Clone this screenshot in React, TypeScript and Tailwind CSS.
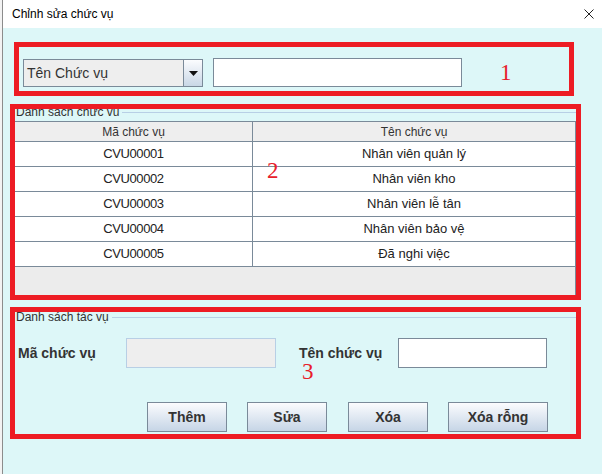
const rows = [
  { code: "CVU00001", name: "Nhân viên quản lý" },
  { code: "CVU00002", name: "Nhân viên kho" },
  { code: "CVU00003", name: "Nhân viên lễ tân" },
  { code: "CVU00004", name: "Nhân viên bảo vệ" },
  { code: "CVU00005", name: "Đã nghi việc" },
];

const buttons = [
  { label: "Thêm", cls: "ml-[132px] w-[80px]" },
  { label: "Sửa", cls: "ml-[20px] w-[80px]" },
  { label: "Xóa", cls: "ml-[21px] w-[80px]" },
  { label: "Xóa rỗng", cls: "ml-[20px] w-[100px]" },
];

export default function App() {
  return (
    <div className="flex w-[602px] h-[474px] bg-white font-['Liberation_Sans',Arial,sans-serif] text-[#222]">
      {/* window edge */}
      <div className="w-[2px] bg-[#f3f3f3]" />
      <div className="w-px bg-[#8c8c8c]" />

      <div className="flex flex-col flex-1">
        {/* Title bar */}
        <div className="h-[28px] flex items-center justify-between bg-white pl-[9px] pr-[8px]">
          <span className="text-[12px] text-black">Chỉnh sửa chức vụ</span>
          <svg width="10" height="10" viewBox="0 0 10 10" className="mr-[0px]">
            <path d="M0.5 0.5 L9.5 9.5 M9.5 0.5 L0.5 9.5" stroke="#222" strokeWidth="1" />
          </svg>
        </div>

        <div className="flex-1 bg-[#ddf7f8] flex flex-col">
          {/* Section 1 */}
          <div className="ml-[11px] mt-[14px] w-[560px] h-[54px] border-[5px] border-[#ed1c24] flex items-start pl-[4px] pt-[11px]">
            <div className="mt-[1px] w-[180px] h-[28px] flex border border-[#7a8a99] bg-[#eeeeee]">
              <div className="flex-1 flex items-center pl-[3px] text-[14px] text-[#333]">Tên Chức vụ</div>
              <div className="w-[19px] flex items-center justify-center border-l border-[#7a8a99] bg-linear-to-b from-[#fbfcfe] to-[#c9d7e6]">
                <svg width="9" height="5" viewBox="0 0 9 5">
                  <path d="M0 0 H9 L4.5 5 Z" fill="#111" />
                </svg>
              </div>
            </div>
            <div className="ml-[10px] w-[249px] h-[29px] bg-white border border-[#7a8a99]" />
            <span className="ml-[38px] mt-[3px] text-[23px] leading-none text-[#e8202a] font-['Liberation_Serif',serif]">
              1
            </span>
          </div>

          {/* Section 2 */}
          <div className="relative ml-[7px] mt-[8px] w-[571px] h-[196px] border-[5px] border-[#ed1c24] flex flex-col">
            <div className="h-[8px] overflow-hidden">
              <div className="-mt-[2px] h-[10px] flex items-center">
                <span className="ml-[1px] text-[12px] leading-[10px] text-[#333]">Danh sách chức vụ</span>
                <div className="flex-1 ml-[3px] h-px bg-[#b8cfe5]" />
              </div>
            </div>

            <div className="mt-[4px] flex-1 flex flex-col border-t border-r border-[#7a8a99]">
              <div className="h-[20px] flex bg-[#eeeeee] border-b border-[#7a8a99] text-[12px] text-[#333]">
                <div className="w-[238px] flex items-center justify-center border-r border-[#7a8a99]">Mã chức vụ</div>
                <div className="flex-1 flex items-center justify-center">Tên chức vụ</div>
              </div>
              {rows.map((r) => (
                <div key={r.code} className="h-[25px] flex bg-white border-b border-[#7a8a99] text-[13px]">
                  <div className="w-[238px] flex items-center justify-center border-r border-[#7a8a99] tracking-[-0.4px]">
                    {r.code}
                  </div>
                  <div className="flex-1 flex items-center justify-center">{r.name}</div>
                </div>
              ))}
              <div className="flex-1 bg-[#ececec]" />
            </div>

            <span className="absolute left-[252px] top-[50px] text-[23px] leading-none text-[#e8202a] font-['Liberation_Serif',serif]">
              2
            </span>
          </div>

          {/* Section 3 */}
          <div className="relative ml-[7px] mt-[7px] w-[571px] h-[132px] border-[5px] border-[#ed1c24] flex flex-col">
            <div className="h-[10px] flex items-center">
              <span className="ml-[1px] text-[12px] leading-[10px] text-[#333]">Danh sách tác vụ</span>
              <div className="flex-1 ml-[3px] h-px bg-[#b8cfe5]" />
            </div>

            <div className="mt-[16px] h-[30px] flex items-center">
              <div className="w-[111px] pl-[3px] text-[14px] font-bold text-[#333]">Mã chức vụ</div>
              <div className="w-[150px] h-[30px] bg-[#eeeeee] border border-[#b8cfe5]" />
              <div className="ml-[23px] w-[99px] text-[14px] font-bold text-[#333]">Tên chức vụ</div>
              <div className="w-[149px] h-[30px] bg-white border border-[#7a8a99]" />
            </div>

            <div className="mt-[34px] h-[30px] flex">
              {buttons.map((b) => (
                <button
                  key={b.label}
                  className={`${b.cls} h-[30px] border border-[#7a8a99] bg-linear-to-b from-[#fbfcfe] to-[#c6d5e6] text-[14px] font-bold text-[#333]`}
                >
                  {b.label}
                </button>
              ))}
            </div>

            <span className="absolute left-[287px] top-[48px] text-[23px] leading-none text-[#e8202a] font-['Liberation_Serif',serif]">
              3
            </span>
          </div>
        </div>
      </div>
    </div>
  );
}
